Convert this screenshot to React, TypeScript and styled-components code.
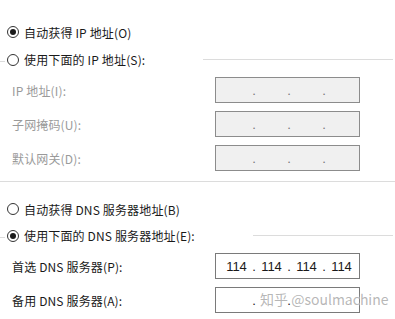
import styled, { createGlobalStyle } from "styled-components";

const GlobalStyle = createGlobalStyle`
  html, body {
    margin: 0;
    padding: 0;
    background: #ffffff;
  }
  body {
    font-family: "Noto Sans CJK SC", "Noto Sans", sans-serif;
    font-size: 12px;
    letter-spacing: 0.15px;
    color: #1a1a1a;
  }
`;

const Page = styled.div`
  position: relative;
  width: 395px;
  height: 319px;
  padding-top: 22px;
  box-sizing: border-box;
  overflow: hidden;
`;

const RadioRow = styled.label<{ $top?: number }>`
  display: flex;
  align-items: center;
  height: 20px;
  margin-top: ${({ $top }) => $top ?? 0}px;
  padding-left: 7px;
  gap: 5px;
  white-space: nowrap;
`;

const GroupHeader = styled.div<{ $top: number; $ruleStart: number }>`
  display: grid;
  grid-template-columns: ${({ $ruleStart }) => $ruleStart}px 1fr;
  align-items: center;
  height: 20px;
  margin-top: ${({ $top }) => $top}px;
  padding-right: 2px;
`;

const HeaderLeft = styled.div`
  display: flex;
  align-items: center;
  white-space: nowrap;
`;

const Stub = styled.span`
  width: 5px;
  height: 1px;
  background: #dcdcdc;
  margin-right: 2px;
  margin-top: 2px;
`;

const HeaderRule = styled.span`
  height: 1px;
  background: #dcdcdc;
  margin-top: -1px;
`;

const RadioCircle = styled.span<{ $checked?: boolean }>`
  position: relative;
  flex: none;
  width: 12px;
  height: 12px;
  box-sizing: border-box;
  border: 1px solid #333333;
  border-radius: 50%;
  background: #ffffff;

  &::after {
    content: "";
    display: ${({ $checked }) => ($checked ? "block" : "none")};
    position: absolute;
    left: 2px;
    top: 2px;
    width: 6px;
    height: 6px;
    border-radius: 50%;
    background: #1a1a1a;
  }
`;

const RadioText = styled.span`
  line-height: 20px;
  margin-left: 5px;
`;

const FieldRow = styled.div<{ $top: number }>`
  display: flex;
  align-items: center;
  justify-content: space-between;
  height: 26px;
  margin-top: ${({ $top }) => $top}px;
  padding-left: 12px;
  width: 360px;
  box-sizing: border-box;
`;

const FieldLabel = styled.span<{ $disabled?: boolean }>`
  color: ${({ $disabled }) => ($disabled ? "#9a9a9a" : "#1a1a1a")};
  white-space: nowrap;
`;

const IpBox = styled.div<{ $disabled?: boolean }>`
  display: flex;
  align-items: center;
  width: 145px;
  height: 26px;
  box-sizing: border-box;
  padding-left: 6px;
  border: 1px solid ${({ $disabled }) => ($disabled ? "#8c8c8c" : "#7a7a7a")};
  background: ${({ $disabled }) => ($disabled ? "#f0f0f0" : "#ffffff")};
  font-family: "Liberation Sans", Arial, sans-serif;
  font-size: 13px;
  letter-spacing: 0;
  color: #1a1a1a;
`;

const Octet = styled.span`
  width: 29px;
  text-align: center;
`;

const Dot = styled.span<{ $disabled?: boolean }>`
  width: 6px;
  text-align: center;
  color: ${({ $disabled }) => ($disabled ? "#777777" : "#1a1a1a")};
`;

const Divider = styled.div`
  height: 1px;
  background: #dcdcdc;
  margin-top: 10px;
`;

const Watermark = styled.div`
  position: absolute;
  left: 260px;
  top: 289px;
  font-size: 14px;
  letter-spacing: 0;
  color: rgba(160, 160, 160, 0.75);
  text-shadow: 0 0 2px #ffffff, 0 0 1px #ffffff;
  white-space: nowrap;
`;

type IpProps = { value?: string[]; disabled?: boolean };

const IpField = ({ value = ["", "", "", ""], disabled }: IpProps) => (
  <IpBox $disabled={disabled}>
    {value.map((v, i) => (
      <span key={i} style={{ display: "contents" }}>
        {i > 0 && <Dot $disabled={disabled}>.</Dot>}
        <Octet>{v}</Octet>
      </span>
    ))}
  </IpBox>
);

export default function App() {
  return (
    <Page>
      <GlobalStyle />
      <RadioRow>
        <RadioCircle $checked />
        <span>自动获得 IP 地址(O)</span>
      </RadioRow>

      <GroupHeader $top={8} $ruleStart={203}>
        <HeaderLeft>
          <Stub />
          <RadioCircle />
          <RadioText>使用下面的 IP 地址(S):</RadioText>
        </HeaderLeft>
        <HeaderRule />
      </GroupHeader>

      <FieldRow $top={7}>
        <FieldLabel $disabled>IP 地址(I):</FieldLabel>
        <IpField disabled />
      </FieldRow>
      <FieldRow $top={8}>
        <FieldLabel $disabled>子网掩码(U):</FieldLabel>
        <IpField disabled />
      </FieldRow>
      <FieldRow $top={8}>
        <FieldLabel $disabled>默认网关(D):</FieldLabel>
        <IpField disabled />
      </FieldRow>

      <Divider />

      <RadioRow $top={17}>
        <RadioCircle />
        <span>自动获得 DNS 服务器地址(B)</span>
      </RadioRow>

      <GroupHeader $top={7} $ruleStart={253}>
        <HeaderLeft>
          <Stub />
          <RadioCircle $checked />
          <RadioText>使用下面的 DNS 服务器地址(E):</RadioText>
        </HeaderLeft>
        <HeaderRule />
      </GroupHeader>

      <FieldRow $top={7}>
        <FieldLabel>首选 DNS 服务器(P):</FieldLabel>
        <IpField value={["114", "114", "114", "114"]} />
      </FieldRow>
      <FieldRow $top={8}>
        <FieldLabel>备用 DNS 服务器(A):</FieldLabel>
        <IpField />
      </FieldRow>

      <Watermark>知乎 @soulmachine</Watermark>
    </Page>
  );
}
